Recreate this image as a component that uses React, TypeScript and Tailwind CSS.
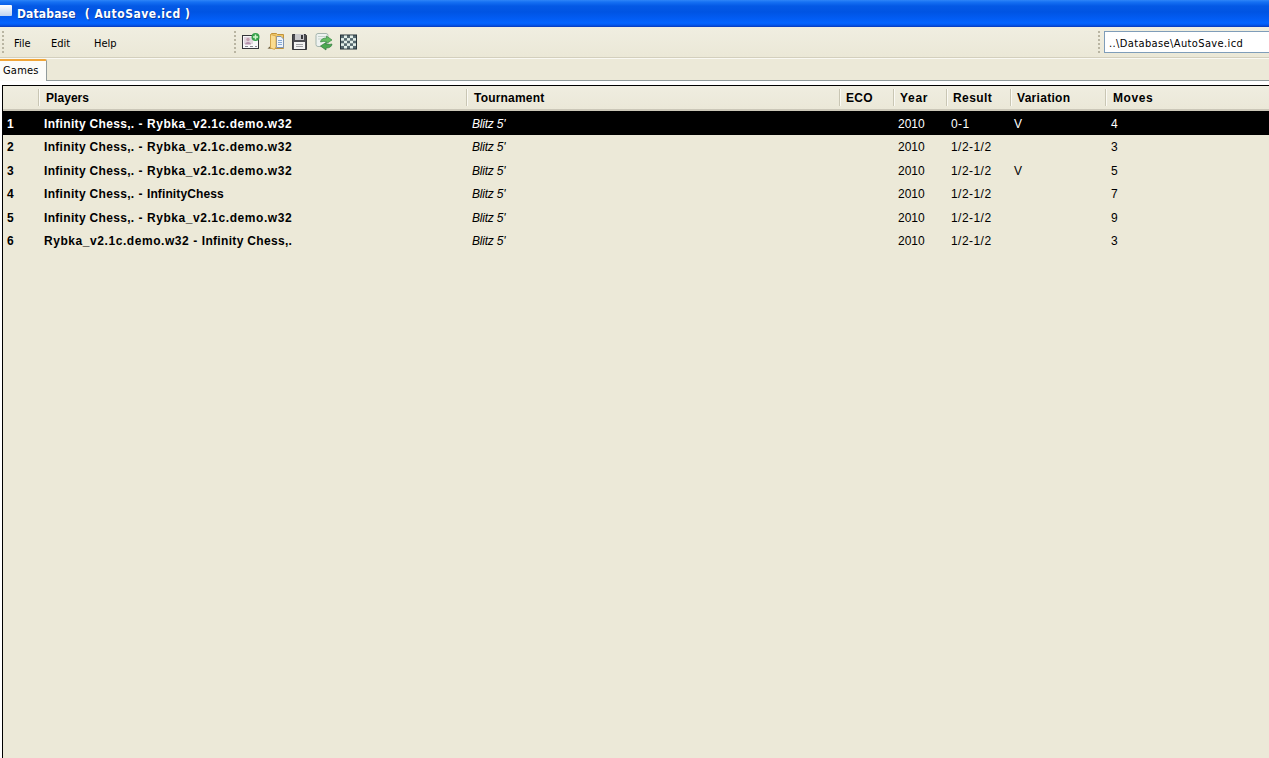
type Game = { players: [string, string]; result: string; variation: string; moves: string };

const ENGINE = "Rybka_v2.1c.demo.w32";
const SITE = "Infinity Chess,.";
const games: Game[] = [
  { players: [SITE, ENGINE], result: "0-1", variation: "V", moves: "4" },
  { players: [SITE, ENGINE], result: "1/2-1/2", variation: "", moves: "3" },
  { players: [SITE, ENGINE], result: "1/2-1/2", variation: "V", moves: "5" },
  { players: [SITE, "InfinityChess"], result: "1/2-1/2", variation: "", moves: "7" },
  { players: [SITE, ENGINE], result: "1/2-1/2", variation: "", moves: "9" },
  { players: [ENGINE, SITE], result: "1/2-1/2", variation: "", moves: "3" },
];

const COLUMNS = "grid grid-cols-[35px_428px_373px_54px_53px_64px_95px_1fr]";

function Grip() {
  return (
    <svg width="2" height="24" viewBox="0 0 2 24" className="shrink-0">
      {[0, 4, 8, 12, 16, 20].map((y) => (
        <rect key={y} x="0" y={y + 1} width="2" height="2" fill="#b9b5a2" />
      ))}
    </svg>
  );
}

function NewDatabaseIcon() {
  return (
    <svg width="18" height="18" viewBox="0 0 18 18">
      <rect x="0.5" y="2.5" width="16" height="13" fill="#f8f7f8" stroke="#35353a" />
      <rect x="2" y="4" width="9" height="7" fill="#e3d6df" />
      <circle cx="6" cy="6.500" r="1.7" fill="#c4a0b0" />
      <path d="M3 11.500c0-3.500 6-3.500 6 0z" fill="#b592ac" />
      <path d="M3 13.500h3m2 0h3m2 0h2" stroke="#8a8a92" />
      <circle cx="13.5" cy="4" r="4" fill="#35a04a" />
      <path d="M13.500 1.500v5M11 4h5" stroke="#d3f6cd" strokeWidth="1.500" />
    </svg>
  );
}

function OpenIcon() {
  return (
    <svg width="18" height="18" viewBox="0 0 18 18">
      <path d="M0.500 15.500l3-2.500h5v3z" fill="#6b5a38" />
      <path d="M3.500 1.500l1-1h5l1 1h6v14h-13z" fill="#f0c766" stroke="#c2933a" />
      <path d="M9.500 3.500h4.500l2.500 2.500v8.500h-7z" fill="#eef4fb" stroke="#7f93b0" />
      <path d="M11 7.500h4m-4 2h4m-4 2h4" stroke="#86a9d5" />
      <path d="M3.500 1.500L9 3v10.500l-1.500 3L3.500 15z" fill="#fadc8f" stroke="#d0a145" strokeWidth="0.800" />
    </svg>
  );
}

function SaveIcon() {
  return (
    <svg width="16" height="17" viewBox="0 0 16 17">
      <path d="M0.500 0.500h13l1 1v14h-14z" fill="#4b4b50" stroke="#37373b" />
      <rect x="3" y="0" width="9" height="6" fill="#c9c9cc" />
      <rect x="9" y="1" width="2" height="4" fill="#37373b" />
      <rect x="2" y="8" width="11" height="7" fill="#f2f2f2" />
      <path d="M4 10.500h7m-7 2h7" stroke="#a0a0a4" />
    </svg>
  );
}

function RefreshIcon() {
  return (
    <svg width="18" height="18" viewBox="0 0 18 18">
      <path d="M1 2.500q0-2 2-2h8q2 0 2 2v9q0 2-2 2H3q-2 0-2-2z" fill="#eef2f0" stroke="#a5b5ae" />
      <path d="M3 3.500h8M3 6h6" stroke="#c5d3cc" />
      <path d="M5.500 9q.5-4 6-4V3l5.500 4-5.500 3.500V8.500q-3-.4-6 .5z" fill="#64bd62" stroke="#3b8746" strokeWidth="0.700" />
      <path d="M17 11q-.5 4-6 4v2L5.500 13 11 9.500v2q3 .3 6-.5z" fill="#4aa950" stroke="#32783e" strokeWidth="0.700" />
    </svg>
  );
}

function BoardIcon() {
  const squares = [];
  for (let y = 0; y < 5; y++)
    for (let x = 0; x < 5; x++)
      if ((x + y) % 2 === 1)
        squares.push(<rect key={`${x}-${y}`} x={1 + x * 3} y={1.5 + y * 2.6} width="3" height="2.6" fill="#e3efe9" />);
  return (
    <svg width="18" height="16" viewBox="0 0 18 16">
      <rect x="0" y="0.500" width="17" height="15" fill="#27343a" />
      <rect x="1" y="1.500" width="15" height="13" fill="#56696f" />
      {squares}
    </svg>
  );
}

function Heading({ children, className }: { children?: string; className: string }) {
  return (
    <div className="flex items-center border-l border-[#c9c6b4] shadow-[inset_1px_0_0_#fbfaf4]">
      <span className={className}>{children}</span>
    </div>
  );
}

function PlayerName({ name }: { name: string }) {
  return <span className={name === ENGINE ? "tracking-[0.56px]" : name === SITE ? "tracking-[0.32px]" : "tracking-[0.12px]"}>{name}</span>;
}

export default function App() {
  return (
    <div className="flex h-[758px] w-[1269px] flex-col overflow-hidden bg-[#ece9d8] font-['Liberation_Sans',sans-serif] text-[12px] leading-none whitespace-pre text-black">
      <header className="flex h-[27px] shrink-0 items-center bg-[linear-gradient(#2f86f8_0px,#1671f3_2px,#0459e5_6px,#0054e3_12px,#025df5_19px,#0464ff_23px,#0258ee_25px,#0a39b8_27px)]">
        <span className="mb-[6px] h-[11px] w-[12px] rounded-r-[1px] bg-linear-to-b from-white to-[#bed3f0]" />
        <h1 className="ml-[5px] font-['DejaVu_Sans_Condensed','DejaVu_Sans',sans-serif] text-[12px] font-bold text-white [text-shadow:1px_1px_0_#0a3a9f]">
          <span className="tracking-[0.15px]">Database</span>
          <span className="ml-[9px] tracking-[0.53px]">( AutoSave.icd )</span>
        </h1>
      </header>

      <div className="flex h-[31px] shrink-0 items-center border-b border-[#d3cfbd] bg-linear-to-b from-[#f0eee1] to-[#ebe8d7]">
        <div className="flex w-[234px] items-center pl-[2px]">
          <Grip />
          <nav className="flex pt-[2px] font-['DejaVu_Sans_Condensed','DejaVu_Sans',sans-serif] text-[11px]">
            <span className="ml-[10px] w-[37px]">File</span>
            <span className="w-[43px]">Edit</span>
            <span>Help</span>
          </nav>
        </div>
        <Grip />
        <div className="ml-[6px] flex items-center gap-[7px]">
          <NewDatabaseIcon />
          <OpenIcon />
          <SaveIcon />
          <RefreshIcon />
          <BoardIcon />
        </div>
        <div className="ml-auto flex w-[171px] items-center">
          <Grip />
          <div className="ml-[4px] flex h-[22px] flex-1 items-center border border-r-0 border-[#7f9db9] bg-white pt-[2px] pl-[4px] font-['DejaVu_Sans_Condensed','DejaVu_Sans',sans-serif] text-[11px] tracking-[0.38px]">
            ..\Database\AutoSave.icd
          </div>
        </div>
      </div>

      <div className="flex h-[23px] shrink-0 items-end border-t border-[#faf9f3]">
        <div className="flex h-[22px] w-[47px] items-center rounded-tr-[2px] border-t-2 border-r border-t-[#f0a63a] border-r-[#919b9c] bg-[#fcfcf9] pb-[2px] pl-[3px] font-['DejaVu_Sans_Condensed','DejaVu_Sans',sans-serif] text-[11px] tracking-[0.2px]">
          Games
        </div>
        <div className="h-px flex-1 bg-[#919b9c]" />
      </div>

      <div className="flex min-h-0 flex-1 flex-col bg-white pt-[4px] pl-[2px]">
        <main className="flex-1 border-t border-l border-black bg-[#ece9d8]">
          <div className={`${COLUMNS} h-[25px] border-b-2 border-[#cbc7b8] bg-linear-to-b from-[#efede0] to-[#ebe8d8] py-[3px] font-bold`}>
            <span />
            <Heading className="pl-[7px] tracking-[0.05px]">Players</Heading>
            <Heading className="pl-[7px] tracking-[0.2px]">Tournament</Heading>
            <Heading className="pl-[6px] tracking-[0.3px]">ECO</Heading>
            <Heading className="pl-[6px] tracking-[0.7px]">Year</Heading>
            <Heading className="pl-[6px] tracking-[0.4px]">Result</Heading>
            <Heading className="pl-[6px] tracking-[0.3px]">Variation</Heading>
            <Heading className="pl-[7px] tracking-[0.6px]">Moves</Heading>
          </div>
          {games.map((game, i) => (
            <div key={i} className={`${COLUMNS} items-center pt-[1.5px] ${i === 0 ? "h-[24px] bg-black text-white" : "h-[23.4px]"}`}>
              <span className="pl-[4px] font-bold">{i + 1}</span>
              <span className="pl-[6px] font-bold">
                <PlayerName name={game.players[0]} />
                <span className="tracking-[0.6px]"> - </span>
                <PlayerName name={game.players[1]} />
              </span>
              <span className="pl-[6px] tracking-[-0.2px] italic">Blitz 5'</span>
              <span />
              <span className="pl-[5px]">2010</span>
              <span className="pl-[5px] tracking-[0.45px]">{game.result}</span>
              <span className="pl-[4px]">{game.variation}</span>
              <span className="pl-[6px]">{game.moves}</span>
            </div>
          ))}
        </main>
      </div>
    </div>
  );
}
